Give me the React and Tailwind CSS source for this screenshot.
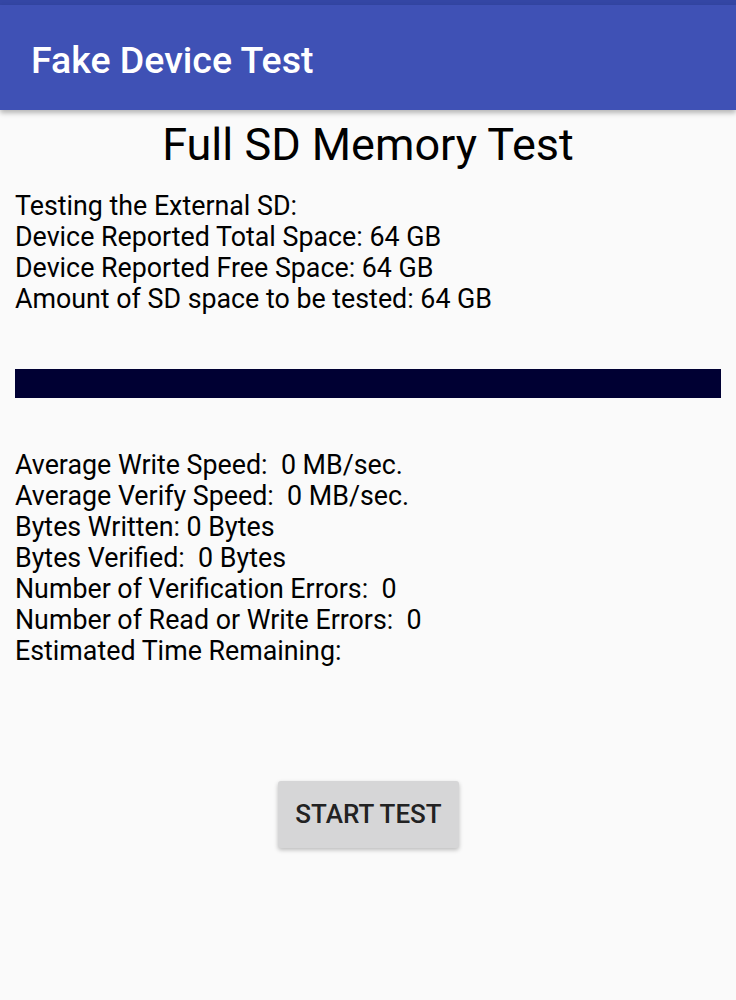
import React from 'react';

const infoLines = [
  'Testing the External SD:',
  'Device Reported Total Space: 64 GB',
  'Device Reported Free Space: 64 GB',
  'Amount of SD space to be tested: 64 GB',
];

const statLines = [
  'Average Write Speed:  0 MB/sec.',
  'Average Verify Speed:  0 MB/sec.',
  'Bytes Written: 0 Bytes',
  'Bytes Verified:  0 Bytes',
  'Number of Verification Errors:  0',
  'Number of Read or Write Errors:  0',
  'Estimated Time Remaining:',
];

export default function App() {
  return (
    <div className="w-[736px] h-[1000px] bg-[#fafafa] flex flex-col font-['Roboto',sans-serif] text-black overflow-hidden">
      {/* status bar strip */}
      <div className="h-[5px] bg-[#3446a4] shrink-0" />

      {/* app bar */}
      <div className="h-[105px] bg-[#3f51b5] shrink-0 flex items-center px-[31px] shadow-[0_3px_5px_rgba(0,0,0,0.28)] relative z-10">
        <h1 className="text-white text-[37.5px] font-medium leading-none pt-[6px]">Fake Device Test</h1>
      </div>

      <div className="flex flex-col px-[15px]">
        <h2 className="text-center text-[45px] leading-[52px] pt-[9px]">Full SD Memory Test</h2>

        <div className="mt-[20px] text-[26.8px] leading-[31px] whitespace-pre">
          {infoLines.map((l) => (
            <div key={l}>{l}</div>
          ))}
        </div>

        {/* progress bar */}
        <div className="mt-[54px] h-[29px] w-[706px] bg-[#000033]" />

        <div className="mt-[52px] text-[26.8px] leading-[31px] whitespace-pre">
          {statLines.map((l) => (
            <div key={l}>{l}</div>
          ))}
        </div>

        <div className="flex justify-center mt-[114px]">
          <button className="w-[181px] h-[67px] rounded-[3px] bg-[#d6d6d7] shadow-[0_2px_4px_rgba(0,0,0,0.25)] text-[26px] font-medium text-[#222] ml-[1px]">
            START TEST
          </button>
        </div>
      </div>
    </div>
  );
}
